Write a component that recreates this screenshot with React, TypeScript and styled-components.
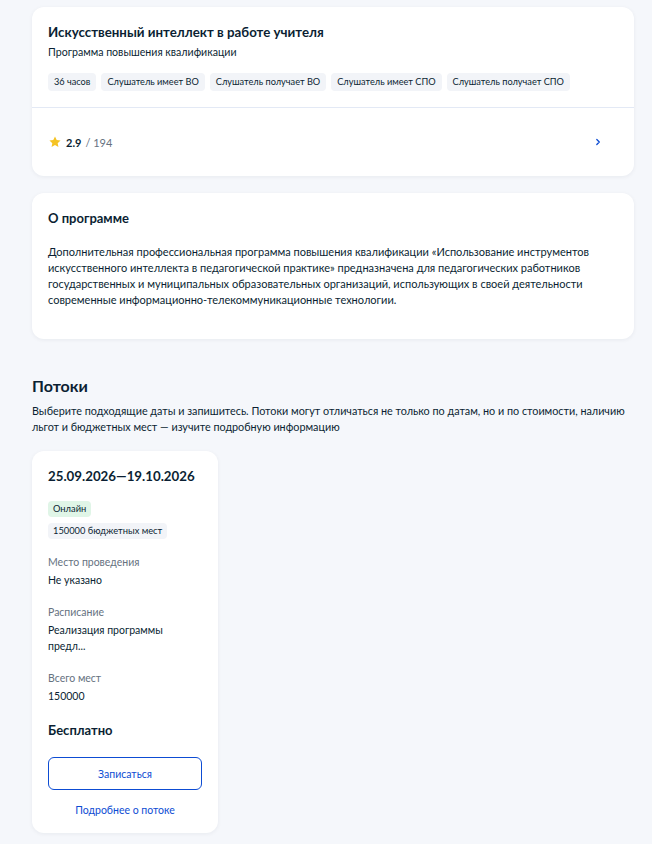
import React from "react";
import styled, { createGlobalStyle } from "styled-components";

const GlobalStyle = createGlobalStyle`
  body {
    margin: 0;
    background: #f5f7fb;
    font-family: Lato, "Noto Sans", sans-serif;
    color: #0b1f33;
  }
`;

const tags = [
  "36 часов",
  "Слушатель имеет ВО",
  "Слушатель получает ВО",
  "Слушатель имеет СПО",
  "Слушатель получает СПО",
];

const streamInfo = [
  { label: "Место проведения", value: "Не указано" },
  { label: "Расписание", value: "Реализация программы предл..." },
  { label: "Всего мест", value: "150000" },
];

export default function App() {
  return (
    <>
      <GlobalStyle />
      <Page>
        <Card>
          <CardHead>
            <Title>Искусственный интеллект в работе учителя</Title>
            <Subtitle>Программа повышения квалификации</Subtitle>
            <TagList>
              {tags.map((tag) => (
                <Tag key={tag}>{tag}</Tag>
              ))}
            </TagList>
          </CardHead>
          <RatingRow>
            <Rating>
              <svg width="14" height="14" viewBox="0 0 24 24">
                <path
                  d="M12 2.5l2.9 6.1 6.6.8-4.9 4.6 1.3 6.6L12 17.3l-5.9 3.3 1.3-6.6-4.9-4.6 6.6-.8z"
                  fill="#f5c324"
                />
              </svg>
              <strong>2.9</strong>
              <span>/ 194</span>
            </Rating>
            <svg width="12" height="12" viewBox="0 0 12 12">
              <path
                d="M4.8 3.5l2.5 2.5-2.5 2.5"
                fill="none"
                stroke="#0d4cd3"
                strokeWidth="1.3"
                strokeLinecap="round"
                strokeLinejoin="round"
              />
            </svg>
          </RatingRow>
        </Card>

        <AboutCard>
          <SectionTitle>О программе</SectionTitle>
          <Paragraph>
            Дополнительная профессиональная программа повышения квалификации
            «Использование инструментов искусственного интеллекта в
            педагогической практике» предназначена для педагогических
            работников государственных и муниципальных образовательных
            организаций, использующих в своей деятельности современные
            информационно-телекоммуникационные технологии.
          </Paragraph>
        </AboutCard>

        <Streams>
          <StreamsTitle>Потоки</StreamsTitle>
          <StreamsText>
            Выберите подходящие даты и запишитесь. Потоки могут отличаться не
            только по датам, но и по стоимости, наличию льгот и бюджетных мест —
            изучите подробную информацию
          </StreamsText>
          <StreamCard>
            <Dates>25.09.2026—19.10.2026</Dates>
            <Badges>
              <Badge $tone="green">Онлайн</Badge>
              <Badge>150000 бюджетных мест</Badge>
            </Badges>
            {streamInfo.map((item) => (
              <Info key={item.label}>
                <InfoLabel>{item.label}</InfoLabel>
                <InfoValue>{item.value}</InfoValue>
              </Info>
            ))}
            <Price>Бесплатно</Price>
            <EnrollButton>Записаться</EnrollButton>
            <MoreLink>Подробнее о потоке</MoreLink>
          </StreamCard>
        </Streams>
      </Page>
    </>
  );
}

const Page = styled.div`
  padding: 7px 18px 10px 32px;
  display: flex;
  flex-direction: column;
`;

const Card = styled.div`
  background: #fff;
  border-radius: 12px;
  box-shadow: 0 1px 4px rgba(11, 31, 51, 0.06);
`;

const CardHead = styled.div`
  padding: 15px 16px 16px;
  border-bottom: 1px solid #e3e9f5;
`;

const Title = styled.div`
  font-size: 13.3px;
  font-weight: 700;
  line-height: 20px;
`;

const Subtitle = styled.div`
  font-size: 10.6px;
  line-height: 16px;
  margin-top: 2px;
`;

const TagList = styled.div`
  display: flex;
  flex-wrap: wrap;
  gap: 5px;
  margin-top: 13px;
`;

const Tag = styled.span`
  background: #f2f4f8;
  border-radius: 4px;
  padding: 0 6px;
  font-size: 9.2px;
  line-height: 18px;
`;

const RatingRow = styled.div`
  display: flex;
  align-items: center;
  justify-content: space-between;
  height: 68px;
  padding: 0 30px 0 16px;
`;

const Rating = styled.div`
  display: flex;
  align-items: center;
  gap: 4px;
  font-size: 11px;
  strong {
    font-weight: 700;
  }
  span {
    color: #66727f;
  }
`;

const AboutCard = styled(Card)`
  margin-top: 17px;
  padding: 16px 16px 31px;
`;

const SectionTitle = styled.div`
  font-size: 13px;
  font-weight: 700;
  line-height: 18px;
`;

const Paragraph = styled.p`
  margin: 17px 0 0;
  font-size: 11px;
  line-height: 16px;
`;

const Streams = styled.div`
  margin-top: 36px;
`;

const StreamsTitle = styled.div`
  font-size: 16px;
  font-weight: 700;
  line-height: 22px;
`;

const StreamsText = styled.p`
  margin: 6px 0 0;
  font-size: 10.8px;
  line-height: 16px;
`;

const StreamCard = styled(Card)`
  margin-top: 16px;
  width: 186px;
  box-sizing: border-box;
  padding: 16px 16px 15px;
  display: flex;
  flex-direction: column;
`;

const Dates = styled.div`
  font-size: 13.3px;
  font-weight: 700;
  line-height: 18px;
`;

const Badges = styled.div`
  display: flex;
  flex-direction: column;
  align-items: flex-start;
  gap: 6px;
  margin-top: 16px;
`;

const Badge = styled.span<{ $tone?: "green" }>`
  background: ${(p) => (p.$tone === "green" ? "#e0f5e7" : "#f2f4f8")};
  border-radius: 4px;
  padding: 0 5px;
  font-size: 9.3px;
  line-height: 16px;
`;

const Info = styled.div`
  margin-top: 15px;
  & + & {
    margin-top: 16px;
  }
`;

const InfoLabel = styled.div`
  font-size: 10.5px;
  line-height: 16px;
  color: #66727f;
`;

const InfoValue = styled.div`
  font-size: 10.5px;
  line-height: 16px;
  margin-top: 2px;
`;

const Price = styled.div`
  font-size: 13px;
  font-weight: 700;
  line-height: 18px;
  margin-top: 17px;
`;

const EnrollButton = styled.button`
  margin-top: 18px;
  height: 33px;
  border: 1px solid #0d4cd3;
  border-radius: 6px;
  background: #fff;
  color: #0d4cd3;
  font-family: inherit;
  font-size: 10.5px;
  cursor: pointer;
`;

const MoreLink = styled.a`
  margin-top: 12px;
  text-align: center;
  font-size: 10.5px;
  line-height: 16px;
  color: #0d4cd3;
  cursor: pointer;
`;
